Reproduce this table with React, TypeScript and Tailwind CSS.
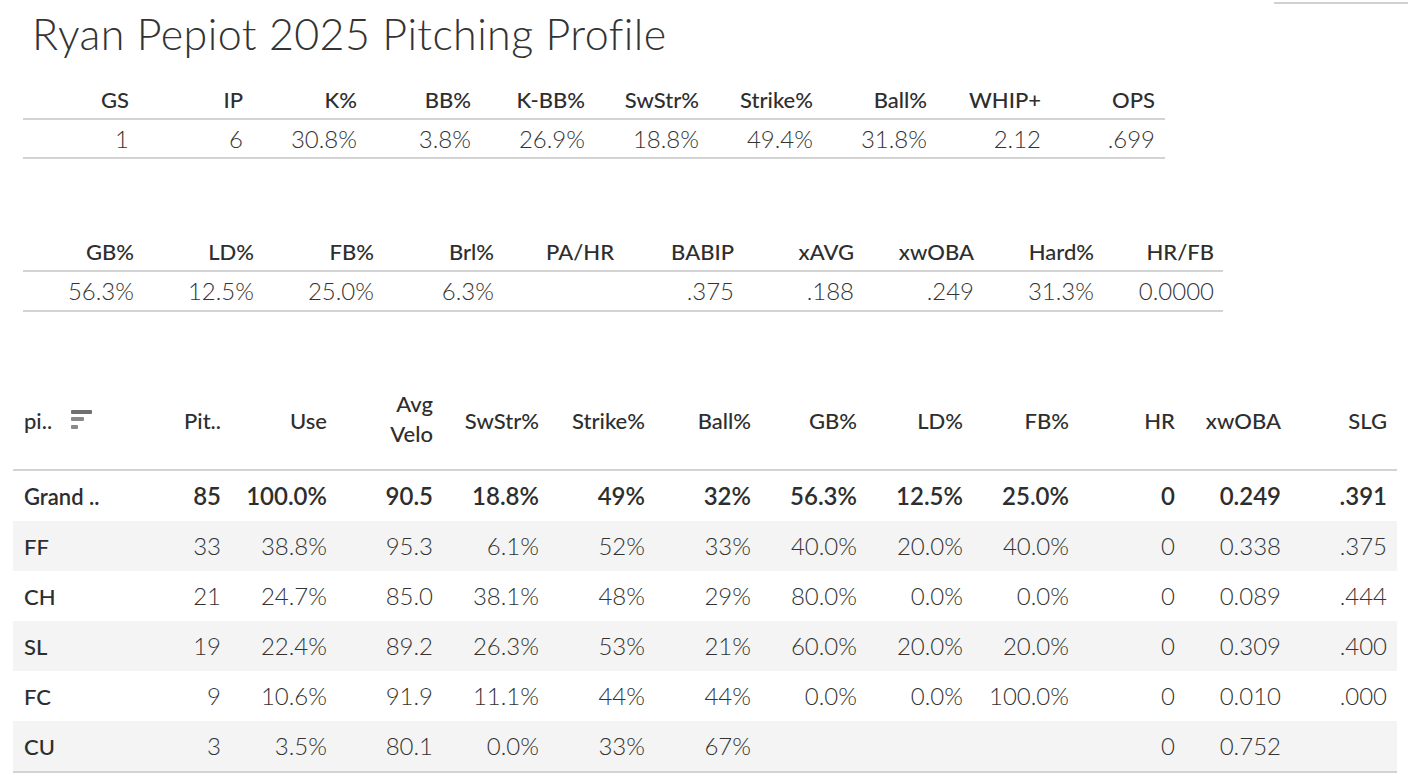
import React from "react";

const t1h = ["GS", "IP", "K%", "BB%", "K-BB%", "SwStr%", "Strike%", "Ball%", "WHIP+", "OPS"];
const t1v = ["1", "6", "30.8%", "3.8%", "26.9%", "18.8%", "49.4%", "31.8%", "2.12", ".699"];
const t2h = ["GB%", "LD%", "FB%", "Brl%", "PA/HR", "BABIP", "xAVG", "xwOBA", "Hard%", "HR/FB"];
const t2v = ["56.3%", "12.5%", "25.0%", "6.3%", "", ".375", ".188", ".249", "31.3%", "0.0000"];

const t3h = ["Pit..", "Use", "AvgVelo", "SwStr%", "Strike%", "Ball%", "GB%", "LD%", "FB%", "HR", "xwOBA", "SLG"];
const rows: string[][] = [
  ["Grand ..", "85", "100.0%", "90.5", "18.8%", "49%", "32%", "56.3%", "12.5%", "25.0%", "0", "0.249", ".391"],
  ["FF", "33", "38.8%", "95.3", "6.1%", "52%", "33%", "40.0%", "20.0%", "40.0%", "0", "0.338", ".375"],
  ["CH", "21", "24.7%", "85.0", "38.1%", "48%", "29%", "80.0%", "0.0%", "0.0%", "0", "0.089", ".444"],
  ["SL", "19", "22.4%", "89.2", "26.3%", "53%", "21%", "60.0%", "20.0%", "20.0%", "0", "0.309", ".400"],
  ["FC", "9", "10.6%", "91.9", "11.1%", "44%", "44%", "0.0%", "0.0%", "100.0%", "0", "0.010", ".000"],
  ["CU", "3", "3.5%", "80.1", "0.0%", "33%", "67%", "", "", "", "0", "0.752", ""],
];

function SortIcon() {
  return (
    <svg width="22" height="20" viewBox="0 0 22 20" className="ml-[19px]">
      <rect x="0" y="0" width="21" height="4" rx="1" fill="#6f6f6f" />
      <rect x="0" y="7" width="13" height="4" rx="1" fill="#8a8a8a" />
      <rect x="0" y="15" width="7" height="4" rx="1" fill="#8a8a8a" />
    </svg>
  );
}

export default function App() {
  return (
    <div
      className="w-[1408px] h-[782px] bg-white overflow-hidden text-[#333333] flex flex-col"
      style={{ fontFamily: "Lato, 'Open Sans', sans-serif" }}
    >
      <div className="h-[4px] flex justify-end items-start pt-[2px]">
        <div className="w-[134px] h-[2px] bg-[#d0d0d0]" />
      </div>
      <div className="h-[76px] pl-[32px] flex items-start pt-[7px]">
        <h1 className="text-[43px] leading-[46px] font-light tracking-[0.4px] text-[#333333]">Ryan Pepiot 2025 Pitching Profile</h1>
      </div>

      {/* Table 1 */}
      <div className="ml-[23px] w-[1142px]">
        <div className="grid grid-cols-[repeat(10,114px)] h-[38px] items-center">
          {t1h.map((h) => (
            <div key={h} className="text-right pr-[8px] text-[22px] font-medium text-[#2e2e2e]">{h}</div>
          ))}
        </div>
        <div className="h-[2px] bg-[#d3d3d3]" />
        <div className="grid grid-cols-[repeat(10,114px)] h-[37px] items-center">
          {t1v.map((v, i) => (
            <div key={i} className="text-right pr-[8px] text-[24px] font-light text-[#333333]">{v}</div>
          ))}
        </div>
        <div className="h-[2px] bg-[#d3d3d3]" />
      </div>

      <div className="h-[73px]" />

      {/* Table 2 */}
      <div className="ml-[23px] w-[1200px]">
        <div className="grid grid-cols-[repeat(10,120px)] h-[38px] items-center">
          {t2h.map((h) => (
            <div key={h} className="text-right pr-[9px] text-[22px] font-medium text-[#2e2e2e]">{h}</div>
          ))}
        </div>
        <div className="h-[2px] bg-[#d3d3d3]" />
        <div className="grid grid-cols-[repeat(10,120px)] h-[38px] items-center">
          {t2v.map((v, i) => (
            <div key={i} className="text-right pr-[9px] text-[24px] font-light text-[#333333]">{v}</div>
          ))}
        </div>
        <div className="h-[2px] bg-[#d3d3d3]" />
      </div>

      <div className="h-[59px]" />

      {/* Table 3 */}
      <div className="ml-[13px] w-[1384px]">
        <div className="grid grid-cols-[112px_repeat(12,106px)] h-[98px] items-center">
          <div className="flex items-center pl-[11px] text-[22px] font-medium text-[#2e2e2e]">
            <span>pi..</span>
            <SortIcon />
          </div>
          {t3h.map((h) =>
            h === "AvgVelo" ? (
              <div key={h} className="text-right pr-[10px] text-[22px] font-medium leading-[30px] text-[#2e2e2e] -mt-[2px]">
                <div>Avg</div>
                <div>Velo</div>
              </div>
            ) : (
              <div key={h} className="text-right pr-[10px] text-[22px] font-medium text-[#2e2e2e]">{h}</div>
            )
          )}
        </div>
        <div className="h-[2px] bg-[#d3d3d3]" />
        {rows.map((r, ri) => (
          <div
            key={ri}
            className={`grid grid-cols-[112px_repeat(12,106px)] h-[50px] items-center ${ri % 2 === 1 ? "bg-[#f4f4f4]" : "bg-white"}`}
          >
            {r.map((v, ci) =>
              ci === 0 ? (
                <div key={ci} className={`pl-[11px] text-[22px] text-[#2e2e2e] ${ri === 0 ? "font-semibold" : "font-medium"}`}>{v}</div>
              ) : (
                <div key={ci} className={`text-right pr-[10px] text-[24px] ${ri === 0 ? "font-semibold text-[#2e2e2e]" : "font-light text-[#333333]"}`}>{v}</div>
              )
            )}
          </div>
        ))}
        <div className="h-[2px] bg-[#d3d3d3]" />
      </div>
    </div>
  );
}
